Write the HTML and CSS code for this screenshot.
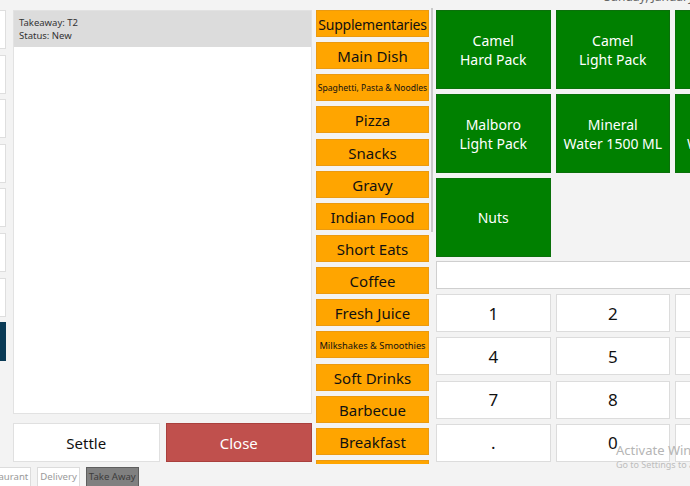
FILE: index.html
```html
<!DOCTYPE html>
<html>
<head>
<meta charset="utf-8">
<link rel="stylesheet" href="styles.css">
</head>
<body>
<div class="app">
  <div class="main">
    <div class="side">
      <div class="side-box"></div>
      <div class="side-box"></div>
      <div class="side-box"></div>
      <div class="side-box"></div>
      <div class="side-box"></div>
      <div class="side-box"></div>
      <div class="side-box"></div>
      <div class="side-box dark"></div>
    </div>
    <div class="order">
      <div class="ticket">
        <div class="ticket-head">
          <div>Takeaway: T2</div>
          <div>Status: New</div>
        </div>
      </div>
      <div class="actions">
        <div class="btn settle">Settle</div>
        <div class="btn close">Close</div>
      </div>
    </div>
    <div class="cats">
      <div class="cat tight">Supplementaries</div>
      <div class="cat">Main Dish</div>
      <div class="cat small">Spaghetti, Pasta &amp; Noodles</div>
      <div class="cat">Pizza</div>
      <div class="cat">Snacks</div>
      <div class="cat">Gravy</div>
      <div class="cat">Indian Food</div>
      <div class="cat">Short Eats</div>
      <div class="cat">Coffee</div>
      <div class="cat">Fresh Juice</div>
      <div class="cat small wide">Milkshakes &amp; Smoothies</div>
      <div class="cat">Soft Drinks</div>
      <div class="cat">Barbecue</div>
      <div class="cat">Breakfast</div>
      <div class="cat">Desserts</div>
    </div>
    <div class="scrollbar"></div>
    <div class="right">
      <div class="date"><span>Sunday, January 2</span></div>
      <div class="tiles">
        <div class="tile">Camel<br>Hard Pack</div>
        <div class="tile">Camel<br>Light Pack</div>
        <div class="tile">Dunhill<br>Switch</div>
        <div class="tile">Malboro<br>Light Pack</div>
        <div class="tile">Mineral<br>Water 1500 ML</div>
        <div class="tile">Mineral<br>Water 500 ML</div>
        <div class="tile">Nuts</div>
      </div>
      <div class="qty"></div>
      <div class="pad">
        <div class="key">1</div>
        <div class="key">2</div>
        <div class="key">3</div>
        <div class="key">4</div>
        <div class="key">5</div>
        <div class="key">6</div>
        <div class="key">7</div>
        <div class="key">8</div>
        <div class="key">9</div>
        <div class="key">.</div>
        <div class="key">0</div>
        <div class="key">C</div>
      </div>
    </div>
  </div>
  <div class="tabs">
    <div class="tab first">Restaurant</div>
    <div class="tab">Delivery</div>
    <div class="tab active">Take Away</div>
  </div>
  <div class="activate">
    <div class="act-1">Activate Windows</div>
    <div class="act-2">Go to Settings to activate Windows.</div>
  </div>
</div>
</body>
</html>
```
FILE: styles.css
```css
html, body {
  margin: 0;
  padding: 0;
  background: #f3f3f3;
  overflow: hidden;
  width: 690px;
  height: 486px;
  font-family: "Noto Sans", "Open Sans", sans-serif;
}

.app {
  position: relative;
  width: 690px;
  height: 486px;
  padding-top: 10px;
  box-sizing: border-box;
  overflow: hidden;
}

.main {
  display: flex;
  height: 454px;
  align-items: flex-start;
}

/* left strip */
.side {
  width: 6px;
  display: flex;
  flex-direction: column;
  gap: 5.6px;
  flex: none;
}
.side-box {
  height: 39px;
  box-sizing: border-box;
  background: #fff;
  border: 1px solid #dedede;
  border-left: none;
}
.side-box.dark {
  background: #0a3a55;
  border-color: #0a3a55;
}

/* order */
.order {
  width: 299px;
  margin-left: 7px;
  flex: none;
  display: flex;
  flex-direction: column;
}
.ticket {
  height: 404px;
  box-sizing: border-box;
  background: #fff;
  border: 1px solid #e2e2e2;
}
.ticket-head {
  height: 36px;
  background: #dcdcdc;
  padding: 5px 0 0 5px;
  box-sizing: border-box;
  font-size: 9.5px;
  line-height: 13px;
  color: #333;
}
.actions {
  margin-top: 9px;
  display: flex;
  gap: 6px;
}
.btn {
  flex: 1;
  height: 39px;
  box-sizing: border-box;
  display: flex;
  align-items: center;
  justify-content: center;
  font-size: 15px;
}
.settle {
  background: #fff;
  border: 1px solid #e0e0e0;
  color: #111;
}
.close {
  background: #c0504d;
  border: 1px solid #a9403d;
  color: #fff;
}

/* categories */
.cats {
  width: 113px;
  margin-left: 4px;
  height: 454px;
  overflow: hidden;
  flex: none;
  display: flex;
  flex-direction: column;
  gap: 5.15px;
}
.cat {
  height: 27px;
  flex: none;
  box-sizing: border-box;
  background: #ffa500;
  border: 1px solid #eb9a10;
  color: #111;
  font-size: 15px;
  padding-top: 1px;
  display: flex;
  align-items: center;
  justify-content: center;
  white-space: nowrap;
}
.cat.tight {
  font-size: 14px;
  letter-spacing: -0.2px;
}
.cat.small {
  font-size: 8.6px;
}
.cat.small.wide {
  font-size: 9.3px;
}

.scrollbar {
  width: 2px;
  height: 224px;
  margin-top: -2px;
  margin-left: 2px;
  background: #c9c9c9;
  flex: none;
}

/* right */
.right {
  margin-left: 3px;
  flex: none;
  width: 360px;
}
.date {
  height: 0;
  font-size: 12px;
  color: #666;
  padding-left: 168px;
}
.date span {
  display: block;
  line-height: 14px;
  white-space: nowrap;
  transform: translateY(-20px);
}
.tiles {
  display: grid;
  grid-template-columns: repeat(3, 114.5px);
  grid-auto-rows: 79px;
  column-gap: 5px;
  row-gap: 5px;
}
.tile {
  background: #008000;
  border: 1px solid #0a700a;
  box-sizing: border-box;
  color: #fff;
  font-size: 14px;
  line-height: 19px;
  display: flex;
  align-items: center;
  justify-content: center;
  text-align: center;
  white-space: nowrap;
}
.qty {
  margin-top: 4px;
  height: 28px;
  box-sizing: border-box;
  background: #fff;
  border: 1px solid #cfcfcf;
}
.pad {
  margin-top: 5px;
  display: grid;
  grid-template-columns: repeat(3, 114.5px);
  grid-auto-rows: 38px;
  column-gap: 5px;
  row-gap: 5.33px;
}
.key {
  background: #fff;
  border: 1px solid #dcdcdc;
  box-sizing: border-box;
  display: flex;
  align-items: center;
  justify-content: center;
  font-size: 17px;
  color: #111;
}

/* tabs */
.tabs {
  margin-top: 3px;
  display: flex;
  gap: 6px;
}
.tab {
  height: 22px;
  box-sizing: border-box;
  padding: 2px 2px 0;
  background: #fff;
  border: 1px solid #dcdcdc;
  font-size: 9.6px;
  color: #9a9a9a;
  white-space: nowrap;
}
.tab.first {
  margin-left: -24px;
}
.tab.active {
  background: #808080;
  border-color: #5e5e5e;
  color: #3c3c3c;
}

/* windows watermark overlay */
.activate {
  position: absolute;
  left: 616px;
  top: 441px;
  color: #b5b5b5;
  white-space: nowrap;
}
.act-1 {
  font-size: 13px;
  line-height: 18px;
}
.act-2 {
  font-size: 9px;
  line-height: 12px;
  color: #bdbdbd;
}
```
